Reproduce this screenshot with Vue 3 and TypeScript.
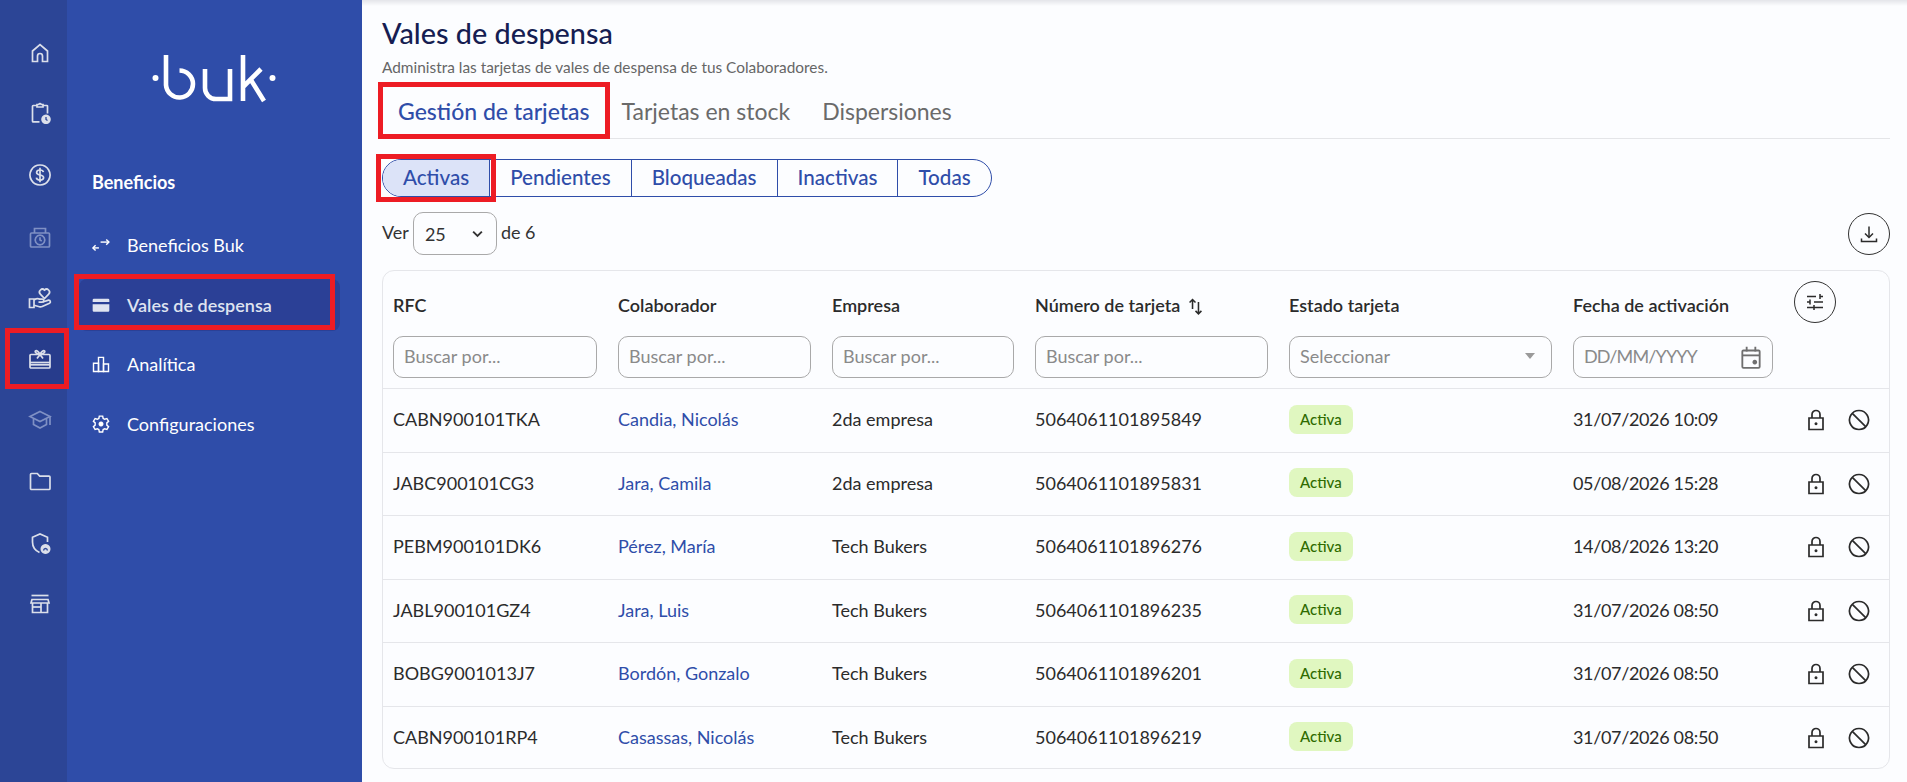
<script setup lang="ts">
interface Icon {
  d: string[];
  f?: string[];
}
interface Card {
  rfc: string;
  name: string;
  company: string;
  number: string;
  date: string;
}

const icons: Record<string, Icon> = {
  home: { d: ['M4.5 20.5V10L12 3.5 19.5 10v10.5h-5V15a2.5 2.5 0 0 0-5 0v5.5z'] },
  clipboard: {
    d: ['M9 3.500H5.200a.7.7 0 0 0-.7.7v15a.7.7 0 0 0 .7.7h6.300', 'M15 3.500h3.800a.7.7 0 0 1 .7.7v7.300', 'M9 5V2.500h1.800a1.300 1.300 0 0 1 2.400 0H15V5z'],
    f: ['M18 12.500a4.800 4.800 0 1 0 .01 0z'],
  },
  dollar: {
    d: ['M12 2a10 10 0 1 0 .01 0z', 'M15.4 9.2C15.2 7.7 13.8 7 12 7s-3.4.9-3.4 2.5 1.5 2.1 3.4 2.5 3.6 1 3.6 2.6-1.7 2.5-3.6 2.5-3.4-.8-3.6-2.4', 'M12 4.8v14.4'],
  },
  timer: {
    d: ['M3.5 8h17a1 1 0 0 1 1 1v12a1 1 0 0 1-1 1h-17a1 1 0 0 1-1-1V9a1 1 0 0 1 1-1z', 'M6.5 8V3.5h11V8', 'M12 10.2a4.8 4.8 0 1 0 .01 0z', 'M12 12.2V15l1.8 1'],
  },
  care: {
    d: ['M16.500 12.500l-4.200-4.400a2.900 2.900 0 0 1 4.200-4 2.900 2.900 0 0 1 4.200 4z', 'M6 13H1.500v8.500H6z', 'M6 14c2.200-1.500 4-1.700 5.800-.9h2.500a1.500 1.500 0 0 1 0 3H10.500', 'M14.800 16l5.700-1.800a1.600 1.600 0 0 1 1 3l-7.300 3.300a4 4 0 0 1-2.800.2L6 19.300'],
  },
  gift: {
    d: ['M3 7.5h18a1 1 0 0 1 1 1V20a1 1 0 0 1-1 1H3a1 1 0 0 1-1-1V8.500a1 1 0 0 1 1-1z', 'M2 15.500h20', 'M2 17.800h20', 'M12 7.500C11 5 8.600 2.800 7.500 3.800 6.400 4.800 8.500 7 12 7.500c3.500-.5 5.600-2.700 4.500-3.700C15.400 2.800 13 5 12 7.500z', 'M12 7.500l-3 4', 'M12 7.500l3 4'],
  },
  school: {
    d: ['M12 3.500l10 5-10 5-10-5z', 'M5.500 11v5.500l6.500 3.500 6.500-3.500V11', 'M22 8.500V17'],
  },
  folder: { d: ['M2.500 4.500a1 1 0 0 1 1-1h5.800l2.400 2.600h9.300a1 1 0 0 1 1 1V18.500a1 1 0 0 1-1 1H3.500a1 1 0 0 1-1-1z'] },
  shield: {
    d: ['M19.500 11V6.200L12 3 4.500 6.200V11c0 4.800 2.800 8.600 7 10.500'],
    f: ['M17.500 13a5 5 0 1 0 .01 0z'],
  },
  store: {
    d: ['M3.500 3.500h17', 'M4 7.500h16l1 3.500H3z', 'M4.500 11V20.500h15V11', 'M4.500 15h8.500', 'M13 11v9.500'],
  },
  swap: { d: ['M9.500 15.500H2.500', 'M5.500 12.300L2.300 15.500l3.200 3.200', 'M11.500 8.500h10', 'M18.300 5.300l3.200 3.200-3.200 3.200'] },
  card: { d: [], f: ['M3.500 4.500h17a1.500 1.500 0 0 1 1.500 1.500v2.500H2V6a1.500 1.500 0 0 1 1.500-1.500zM2 11h20v7.500a1.500 1.500 0 0 1-1.500 1.500h-17A1.500 1.500 0 0 1 2 18.500z'] },
  bars: { d: ['M3 11h6v10H3z', 'M9 4h6v17H9z', 'M15 12h6v9h-6z'] },
  gear: {
    d: ['M10 2.500h4l.6 2.800 1.800 1 2.700-.9 2 3.400-2.100 1.900v2.600l2.100 1.900-2 3.400-2.700-.9-1.800 1-.6 2.800h-4l-.6-2.800-1.800-1-2.700.9-2-3.400 2.100-1.900v-2.600L2.900 8.800l2-3.400 2.700.9 1.800-1z'],
    f: ['M12 9a3 3 0 1 0 .01 0z'],
  },
}

const railItems = [
  { icon: 'home' },
  { icon: 'clipboard' },
  { icon: 'dollar' },
  { icon: 'timer', dim: true },
  { icon: 'care' },
  { icon: 'gift', active: true },
  { icon: 'school', dim: true },
  { icon: 'folder' },
  { icon: 'shield' },
  { icon: 'store' },
]

const menuItems = [
  { icon: 'swap', label: 'Beneficios Buk' },
  { icon: 'card', label: 'Vales de despensa', active: true },
  { icon: 'bars', label: 'Analítica' },
  { icon: 'gear', label: 'Configuraciones' },
]

const tabs = ['Gestión de tarjetas', 'Tarjetas en stock', 'Dispersiones']
const filters = ['Activas', 'Pendientes', 'Bloqueadas', 'Inactivas', 'Todas']

const cards: Card[] = [
  { rfc: 'CABN900101TKA', name: 'Candia, Nicolás', company: '2da empresa', number: '5064061101895849', date: '31/07/2026 10:09' },
  { rfc: 'JABC900101CG3', name: 'Jara, Camila', company: '2da empresa', number: '5064061101895831', date: '05/08/2026 15:28' },
  { rfc: 'PEBM900101DK6', name: 'Pérez, María', company: 'Tech Bukers', number: '5064061101896276', date: '14/08/2026 13:20' },
  { rfc: 'JABL900101GZ4', name: 'Jara, Luis', company: 'Tech Bukers', number: '5064061101896235', date: '31/07/2026 08:50' },
  { rfc: 'BOBG9001013J7', name: 'Bordón, Gonzalo', company: 'Tech Bukers', number: '5064061101896201', date: '31/07/2026 08:50' },
  { rfc: 'CABN900101RP4', name: 'Casassas, Nicolás', company: 'Tech Bukers', number: '5064061101896219', date: '31/07/2026 08:50' },
]
</script>

<template>
  <div class="page">
    <nav class="rail">
      <div
        v-for="item in railItems"
        :key="item.icon"
        class="rail-item"
        :class="{ dim: item.dim, active: item.active }"
      >
        <svg class="rail-icon" viewBox="0 0 24 24">
          <path v-for="d in icons[item.icon].d" :key="d" :d="d" />
          <path v-for="f in icons[item.icon].f" :key="f" :d="f" class="solid" />
          <path v-if="item.icon === 'clipboard'" d="M18 15v2.500l1.500 1" class="cut" />
          <path v-if="item.icon === 'shield'" d="M17.500 15.500v.01M15.500 19.500c.3-1.400 1-2 2-2s1.700.6 2 2" class="cut" />
        </svg>
        <span v-if="item.active" class="mark"></span>
      </div>
    </nav>

    <aside class="side">
      <svg class="logo" viewBox="0 0 124 50">
        <circle cx="3.500" cy="24" r="3" class="logo-dot" />
        <path d="M14 1v30a13.500 13.500 0 1 0 13.500-14.500M53 15v19a11 11 0 0 0 11 11h14V15M91 1v46M91 33l18-18M99 26l13 21" class="logo-line" />
        <circle cx="120.500" cy="24" r="3" class="logo-dot" />
      </svg>
      <h2 class="side-title">Beneficios</h2>
      <ul class="menu">
        <li v-for="item in menuItems" :key="item.label" class="menu-item" :class="{ active: item.active }">
          <svg class="menu-icon" viewBox="0 0 24 24">
            <path v-for="d in icons[item.icon].d" :key="d" :d="d" />
            <path v-for="f in icons[item.icon].f" :key="f" :d="f" class="solid" />
          </svg>
          <span>{{ item.label }}</span>
          <span v-if="item.active" class="mark"></span>
        </li>
      </ul>
    </aside>

    <main class="main">
      <h1 class="title">Vales de despensa</h1>
      <p class="subtitle">Administra las tarjetas de vales de despensa de tus Colaboradores.</p>

      <div class="tabs">
        <div v-for="(tab, i) in tabs" :key="tab" class="tab" :class="{ active: i === 0 }">
          {{ tab }}
          <span v-if="i === 0" class="mark"></span>
        </div>
      </div>

      <div class="segments">
        <div v-for="(f, i) in filters" :key="f" class="segment" :class="{ active: i === 0 }">
          {{ f }}
          <span v-if="i === 0" class="mark"></span>
        </div>
      </div>

      <div class="toolbar">
        <span class="toolbar-text">Ver</span>
        <div class="page-size">
          <span>25</span>
          <svg class="chevron" viewBox="0 0 12 12"><path d="M2.500 4.500L6 8l3.500-3.500" /></svg>
        </div>
        <span class="toolbar-text">de 6</span>
        <button class="round push">
          <svg viewBox="0 0 24 24">
            <path d="M12 4.500V15" />
            <path d="M8 11.500l4 4 4-4" />
            <path d="M4.500 16.500v3h15v-3" />
          </svg>
        </button>
      </div>

      <section class="table-card">
        <div class="grid head">
          <div class="head-cell"><span class="th">RFC</span><div class="field">Buscar por...</div></div>
          <div class="head-cell"><span class="th">Colaborador</span><div class="field">Buscar por...</div></div>
          <div class="head-cell"><span class="th">Empresa</span><div class="field">Buscar por...</div></div>
          <div class="head-cell">
            <span class="th">Número de tarjeta
              <svg class="sort" viewBox="0 0 16 16">
                <path d="M5.500 11V3M3 5.500L5.500 3 8 5.500" />
                <path d="M10.500 5v10M8 12.500L10.500 15l2.500-2.500" />
              </svg>
            </span>
            <div class="field">Buscar por...</div>
          </div>
          <div class="head-cell">
            <span class="th">Estado tarjeta</span>
            <div class="field split">Seleccionar<span class="caret"></span></div>
          </div>
          <div class="head-cell">
            <span class="th">Fecha de activación</span>
            <div class="field split">
              <span class="tight">DD/MM/YYYY</span>
              <svg class="calendar" viewBox="0 0 24 24">
                <path d="M5 6h14a1 1 0 0 1 1 1v14a1 1 0 0 1-1 1H5a1 1 0 0 1-1-1V7a1 1 0 0 1 1-1z" />
                <path d="M4 10.500h16" />
                <path d="M8 2.500V7M16 2.500V7" />
                <path d="M15.500 14.500a2.200 2.200 0 1 0 .01 0z" class="solid" />
              </svg>
            </div>
          </div>
          <div class="head-tools">
            <button class="round">
              <svg viewBox="0 0 24 24">
                <path d="M4 6.500h9M17 6.500h3M17 4v5" />
                <path d="M4 12h3M7 9.500v5M11 12h9" />
                <path d="M4 17.500h7M11 15v5M11 17.500h9" />
              </svg>
            </button>
          </div>
        </div>

        <div v-for="card in cards" :key="card.rfc" class="grid row">
          <span>{{ card.rfc }}</span>
          <a class="link">{{ card.name }}</a>
          <span>{{ card.company }}</span>
          <span>{{ card.number }}</span>
          <span><span class="badge">Activa</span></span>
          <span class="date">{{ card.date }}</span>
          <div class="actions">
            <svg viewBox="0 0 24 24">
              <path d="M5 10h14v11.500H5z" />
              <path d="M8 10V6.500a4 4 0 0 1 8 0V10" />
              <path d="M12 14.200a1.500 1.500 0 1 0 .01 0z" class="solid" />
            </svg>
            <svg viewBox="0 0 24 24">
              <path d="M12 2.500a9.500 9.500 0 1 0 .01 0z" />
              <path d="M5.300 5.300l13.400 13.400" />
            </svg>
          </div>
        </div>
      </section>
    </main>
  </div>
</template>

<style>
body {
  background: #fcfdff;
}
</style>

<style scoped>
.page {
  display: flex;
  height: 782px;
  overflow: hidden;
  font-family: Lato, "Noto Sans", sans-serif;
  color: #2b2b2b;
  font-size: 18px;
}
svg path {
  fill: none;
  stroke: currentColor;
  stroke-width: 1.7;
}
svg path.solid {
  fill: currentColor;
  stroke: none;
}
.mark {
  position: absolute;
  border: 5px solid #ed1c24;
  pointer-events: none;
}

.rail {
  width: 67px;
  flex: none;
  padding-top: 22px;
  box-sizing: border-box;
  background: #2c4596;
  color: #dbdfea;
}
.rail-item {
  position: relative;
  height: 61.3px;
  display: flex;
  align-items: center;
  justify-content: center;
  padding-left: 13px;
  box-sizing: border-box;
}
.rail-item.dim {
  color: #7f90c4;
}
.rail-item.active {
  background: linear-gradient(#273c8c, #273c8c) no-repeat 10px 5px / 54px 51px;
}
.rail-item .mark {
  left: 5px;
  top: 0;
  width: 64px;
  height: 61px;
  box-sizing: border-box;
}
.rail-icon {
  width: 24px;
  height: 24px;
}
.rail-icon path.cut {
  stroke: #2c4596;
  stroke-width: 1.300;
}

.side {
  width: 295px;
  flex: none;
  background: #2f4da9;
  color: #fff;
  box-sizing: border-box;
  padding: 54px 0 0 25px;
}
.logo {
  display: block;
  width: 124px;
  height: 50px;
  margin-left: 60px;
}
svg path.logo-line {
  stroke: #fff;
  stroke-width: 4.600;
}
.logo-dot {
  fill: #fff;
}
.side-title {
  margin: 66px 0 0;
  font-size: 18px;
  font-weight: 700;
  line-height: 24px;
}
.menu {
  list-style: none;
  margin: 25px 0 0 -13px;
  padding: 0;
}
.menu-item {
  position: relative;
  display: flex;
  align-items: center;
  height: 52px;
  margin-bottom: 8px;
  width: 261px;
  padding-left: 12px;
  gap: 16px;
  box-sizing: border-box;
  font-size: 18px;
  border-radius: 8px;
}
.menu-item:nth-child(2) {
  margin-bottom: 7px;
}
.menu-item.active {
  background: #2b4096;
  color: #dfe3f0;
  font-weight: 600;
}
.menu-item .mark {
  left: -5px;
  top: -5px;
  width: 261px;
  height: 56px;
  box-sizing: border-box;
}
.menu-icon {
  width: 20px;
  height: 20px;
  flex: none;
}

.main {
  flex: 1;
  min-width: 0;
  padding: 0 17px 0 20px;
  background: linear-gradient(#e4e5ea, #fcfdff 6px);
}
.title {
  margin: 0;
  padding-top: 16px;
  font-size: 28.800px;
  font-weight: 500;
  line-height: 34px;
  color: #161d52;
}
.subtitle {
  margin: 7px 0 0;
  font-size: 15.400px;
  line-height: 20px;
  color: #666;
}
.tabs {
  display: flex;
  height: 55px;
  margin-top: 6px;
  border-bottom: 1px solid #e4e5e8;
  box-sizing: content-box;
}
.tab {
  position: relative;
  padding: 0 16px;
  display: flex;
  align-items: center;
  font-size: 23px;
  color: #6a6a6a;
}
.tab.active {
  color: #2f4da9;
  font-weight: 500;
}
.tab .mark {
  left: -4px;
  right: -4px;
  top: -1px;
  bottom: -1px;
}
.segments {
  display: inline-flex;
  height: 38px;
  margin-top: 20px;
  box-sizing: border-box;
  border: 1px solid #2f4da9;
  border-radius: 19px;
  vertical-align: top;
}
.segment {
  position: relative;
  display: flex;
  align-items: center;
  padding: 0 20px 2px;
  font-size: 20.600px;
  font-weight: 500;
  color: #2f4da9;
  border-left: 1px solid #2f4da9;
}
.segment:first-child {
  border-left: 0;
  background: #dce3f8;
  border-radius: 18px 0 0 18px;
  border-right: 1px solid #2f4da9;
}
.segment:first-child + .segment {
  border-left: 0;
}
.segment .mark {
  left: -7px;
  right: -7px;
  top: -6px;
  bottom: -6px;
}
.toolbar {
  display: flex;
  align-items: center;
  gap: 4px;
  height: 43px;
  margin-top: 15px;
  color: #333;
}
.toolbar-text {
  margin-bottom: 3px;
}
.page-size {
  display: flex;
  align-items: center;
  justify-content: space-between;
  width: 84px;
  height: 43px;
  padding: 0 11px;
  box-sizing: border-box;
  border: 1px solid #a9a9a9;
  border-radius: 10px;
}
.chevron {
  width: 15px;
  height: 15px;
}
.chevron path {
  stroke-width: 1.500;
}
.round {
  width: 42px;
  height: 42px;
  padding: 0;
  display: flex;
  align-items: center;
  justify-content: center;
  background: transparent;
  border: 1px solid #333;
  border-radius: 50%;
  color: #2b2b2b;
}
.round svg {
  width: 24px;
  height: 24px;
}
.round path {
  stroke-width: 1.500;
}
.push {
  margin-left: auto;
}

.table-card {
  margin-top: 15px;
  height: 499px;
  box-sizing: border-box;
  border: 1px solid #e5e6ea;
  border-radius: 12px;
}
.grid {
  display: grid;
  grid-template-columns: 204px 193px 182px 233px 263px 200px 1fr;
  column-gap: 21px;
  padding-left: 10px;
}
.head {
  height: 117px;
}
.head-cell {
  display: flex;
  flex-direction: column;
}
.th {
  display: flex;
  align-items: center;
  gap: 6px;
  height: 22px;
  margin-top: 23px;
  margin-bottom: 1px;
  font-weight: 600;
  font-size: 18px;
  color: #2b2b2b;
}
.sort {
  width: 19px;
  height: 19px;
}
.sort path {
  stroke-width: 1.300;
}
.field {
  display: flex;
  align-items: center;
  height: 42px;
  margin-top: 19px;
  padding: 0 10px 3px;
  box-sizing: border-box;
  border: 1px solid #a9a9a9;
  border-radius: 10px;
  color: #8a8a8a;
}
.split {
  justify-content: space-between;
}
.tight {
  letter-spacing: -0.9px;
}
.caret {
  width: 0;
  height: 0;
  margin-right: 6px;
  border-left: 5px solid transparent;
  border-right: 5px solid transparent;
  border-top: 6px solid #9a9a9a;
}
.calendar {
  width: 26px;
  height: 26px;
  margin: 3px -2px 0 0;
  color: #6f6f6f;
}
.head-tools {
  padding-top: 10px;
}
.row {
  height: 63.500px;
  box-sizing: border-box;
  border-top: 1px solid #e5e6ea;
  padding-bottom: 2px;
  align-items: center;
  font-size: 18px;
  color: #2b2b2b;
}
.date {
  letter-spacing: -0.35px;
}
.link {
  color: #2f4da9;
}
.badge {
  display: inline-block;
  padding: 0 11px;
  height: 29px;
  line-height: 29px;
  border-radius: 8px;
  background: #e0f7c0;
  color: #2f6b00;
  font-size: 15px;
  font-weight: 500;
  vertical-align: middle;
}
.actions {
  display: flex;
  gap: 19px;
  padding-left: 10px;
  margin-top: 2px;
}
.actions svg {
  width: 24px;
  height: 24px;
}
</style>
